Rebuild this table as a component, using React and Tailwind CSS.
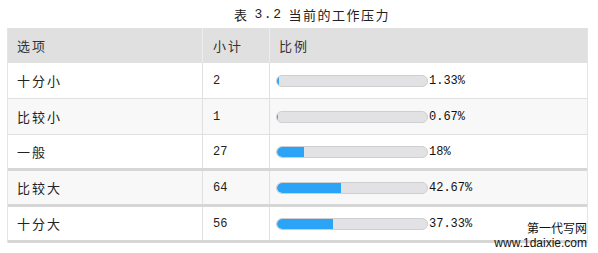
import React from "react";

const rows = [
  { name: "十分小", count: "2", pct: 1.33, label: "1.33%", bg: "bg-white", border: "border-b border-[#e0e0e0]" },
  { name: "比较小", count: "1", pct: 0.67, label: "0.67%", bg: "bg-[#f8f8f8]", border: "border-b border-[#e0e0e0]" },
  { name: "一般", count: "27", pct: 18, label: "18%", bg: "bg-white", border: "border-b-[3px] border-[#d6d6d6]" },
  { name: "比较大", count: "64", pct: 42.67, label: "42.67%", bg: "bg-[#f8f8f8]", border: "border-b-[3px] border-[#d6d6d6]" },
  { name: "十分大", count: "56", pct: 37.33, label: "37.33%", bg: "bg-white", border: "border-b-[3px] border-[#d6d6d6]" },
];

const cjk = { fontFamily: '"Noto Sans CJK SC", sans-serif' };
const mono = { fontFamily: '"Liberation Mono", "Noto Sans CJK SC", monospace' };

export default function App() {
  return (
    <div className="relative w-[598px] h-[253px] bg-white text-[#222] overflow-hidden">
      <div className="h-[28px] flex items-center justify-center pl-[26px] pt-[2px] text-[13px] tracking-[1.5px]" style={cjk}>
        <span>表</span>
        <span className="ml-[6px]" style={mono}>3.2</span>
        <span className="ml-[6px]">当前的工作压力</span>
      </div>
      <div className="ml-[7px] w-[581px] border-l border-r border-[#e4e4e4]">
        <div className="flex h-[35px] bg-[#e0e0e0] text-[13px] text-[#333] tracking-[2px]" style={cjk}>
          <div className="w-[195px] flex items-center pl-[9px] border-r border-[#ededed]">选项</div>
          <div className="w-[67px] flex items-center pl-[10px] border-r border-[#ededed]">小计</div>
          <div className="flex-1 flex items-center pl-[9px]">比例</div>
        </div>
        {rows.map((r) => (
          <div key={r.name} className={`flex h-[36px] ${r.bg} ${r.border}`}>
            <div className="w-[195px] flex items-center pl-[9px] border-r border-[#e0e0e0] text-[13px] tracking-[2px]" style={cjk}>
              {r.name}
            </div>
            <div className="w-[67px] flex items-center pl-[10px] border-r border-[#e0e0e0] text-[12px]" style={mono}>
              {r.count}
            </div>
            <div className="flex-1 flex items-center pl-[6px]">
              <div className="relative w-[152px] h-[12px] rounded-full bg-[#e2e2e4] border border-[#cfcfd2] overflow-hidden">
                <div
                  className="absolute left-0 top-0 h-full bg-[#2ba3f7] rounded-l-full"
                  style={{ width: `${r.pct}%` }}
                />
              </div>
              <span className="ml-[1px] text-[12px] text-[#111]" style={mono}>{r.label}</span>
            </div>
          </div>
        ))}
      </div>
      <div className="absolute right-[11px] top-[221px] flex flex-col items-end text-[#111]">
        <span className="text-[12px] leading-[14px]" style={cjk}>第一代写网</span>
        <span className="text-[12px] leading-[14px] mt-[1px]" style={{ fontFamily: '"Liberation Sans", sans-serif' }}>www.1daixie.com</span>
      </div>
    </div>
  );
}
